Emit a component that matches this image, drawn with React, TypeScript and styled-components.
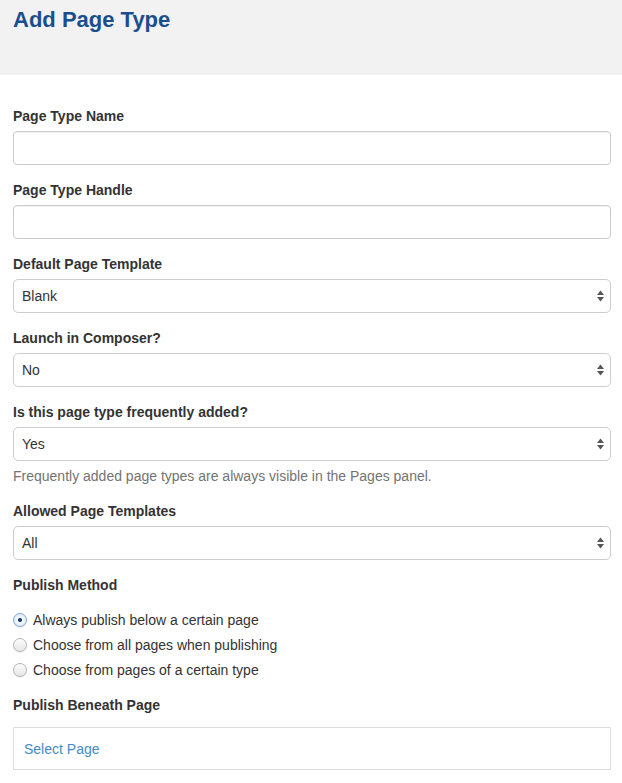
import React from "react";
import styled, { createGlobalStyle } from "styled-components";

const Global = createGlobalStyle`
  html, body { margin: 0; padding: 0; background: #fff; }
  body { font-family: "Liberation Sans", Arial, Helvetica, sans-serif; font-size: 14px; color: #333; }
  * { box-sizing: border-box; }
`;

const Header = styled.header`
  background: #f2f2f2;
  height: 75px;
  padding: 8px 13px 0;
`;

const Title = styled.h1`
  margin: 0;
  font-size: 22px;
  line-height: 24px;
  font-weight: 700;
  color: #1a4e8d;
`;

const Form = styled.form`
  padding: 31px 11px 0 13px;
  display: flex;
  flex-direction: column;
`;

const Group = styled.div`
  display: flex;
  flex-direction: column;
  margin-bottom: 15px;
`;

const Label = styled.label`
  font-weight: 700;
  font-size: 14px;
  line-height: 20px;
  margin-bottom: 5px;
  color: #333;
`;

const TextInput = styled.input`
  height: 34px;
  width: 100%;
  border: 1px solid #ccc;
  border-radius: 4px;
  box-shadow: inset 0 1px 1px rgba(0, 0, 0, 0.06);
  font: inherit;
  padding: 6px 12px;
  background: #fff;
`;

const SelectWrap = styled.div`
  position: relative;
  height: 34px;
`;

const Select = styled.select`
  appearance: none;
  -webkit-appearance: none;
  width: 100%;
  height: 34px;
  border: 1px solid #cdcdcd;
  border-radius: 5px;
  background: #fff;
  font: inherit;
  font-size: 14px;
  color: #333;
  padding: 0 24px 0 8px;
  outline: none;
`;

const Arrows = styled.svg`
  position: absolute;
  right: 6px;
  top: 11px;
  pointer-events: none;
`;

const Help = styled.p`
  margin: 5px 0 0;
  line-height: 20px;
  color: #737373;
  font-size: 14px;
`;

const RadioList = styled.div`
  display: flex;
  flex-direction: column;
  gap: 5px;
  margin-top: 10px;
`;

const RadioRow = styled.label`
  display: flex;
  align-items: center;
  height: 20px;
  font-size: 14px;
  color: #333;
`;

const RadioDot = styled.span<{ $checked?: boolean }>`
  width: 14px;
  height: 14px;
  border-radius: 50%;
  border: 1px solid ${(p) => (p.$checked ? "#7fa7d6" : "#b5b5b5")};
  background: ${(p) =>
    p.$checked
      ? "radial-gradient(circle, #1d3f6e 0 1.7px, #f5f8fc 2.3px, #d3e1f2 100%)"
      : "linear-gradient(#fdfdfd, #e6e6e6)"};
  box-shadow: 0 1px 1px rgba(0, 0, 0, 0.08);
  margin-right: 6px;
  flex: none;
`;

const PagePicker = styled.div`
  height: 43px;
  margin-top: 7px;
  border: 1px solid #ddd;
  display: flex;
  align-items: center;
  padding-left: 10px;
`;

const PickerLink = styled.a`
  color: #428bca;
  font-size: 14px;
  text-decoration: none;
  cursor: pointer;
`;

const SelectField: React.FC<{ value: string; options: string[] }> = ({ value, options }) => (
  <SelectWrap>
    <Select defaultValue={value}>
      {options.map((o) => (
        <option key={o}>{o}</option>
      ))}
    </Select>
    <Arrows width="9" height="12" viewBox="0 0 9 12">
      <path d="M4.5 0.5 L8 5 L1 5 Z" fill="#555" />
      <path d="M4.5 11.5 L8 7 L1 7 Z" fill="#555" />
    </Arrows>
  </SelectWrap>
);

export default function App() {
  return (
    <>
      <Global />
      <Header>
        <Title>Add Page Type</Title>
      </Header>
      <Form onSubmit={(e) => e.preventDefault()}>
        <Group>
          <Label>Page Type Name</Label>
          <TextInput type="text" />
        </Group>
        <Group>
          <Label>Page Type Handle</Label>
          <TextInput type="text" />
        </Group>
        <Group>
          <Label>Default Page Template</Label>
          <SelectField value="Blank" options={["Blank", "Full", "Left Sidebar", "Right Sidebar"]} />
        </Group>
        <Group>
          <Label>Launch in Composer?</Label>
          <SelectField value="No" options={["No", "Yes"]} />
        </Group>
        <Group>
          <Label>Is this page type frequently added?</Label>
          <SelectField value="Yes" options={["Yes", "No"]} />
          <Help>Frequently added page types are always visible in the Pages panel.</Help>
        </Group>
        <Group>
          <Label>Allowed Page Templates</Label>
          <SelectField value="All" options={["All", "Selected", "Everything except selected"]} />
        </Group>
        <Group>
          <Label>Publish Method</Label>
          <RadioList>
            <RadioRow>
              <RadioDot $checked />
              Always publish below a certain page
            </RadioRow>
            <RadioRow>
              <RadioDot />
              Choose from all pages when publishing
            </RadioRow>
            <RadioRow>
              <RadioDot />
              Choose from pages of a certain type
            </RadioRow>
          </RadioList>
        </Group>
        <Group>
          <Label>Publish Beneath Page</Label>
          <PagePicker>
            <PickerLink>Select Page</PickerLink>
          </PagePicker>
        </Group>
      </Form>
    </>
  );
}
